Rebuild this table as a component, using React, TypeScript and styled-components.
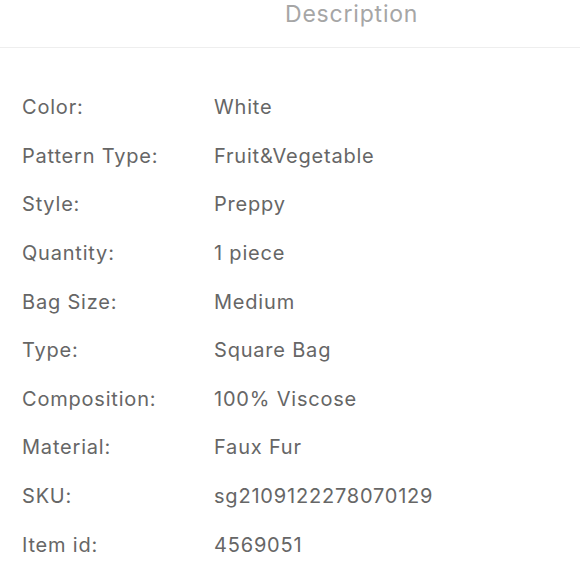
import React from "react";
import styled, { createGlobalStyle } from "styled-components";

const GlobalStyle = createGlobalStyle`
  html, body {
    margin: 0;
    padding: 0;
    background: #ffffff;
    font-family: Inter, "Noto Sans", sans-serif;
  }
`;

const rows: [string, string][] = [
  ["Color:", "White"],
  ["Pattern Type:", "Fruit&Vegetable"],
  ["Style:", "Preppy"],
  ["Quantity:", "1 piece"],
  ["Bag Size:", "Medium"],
  ["Type:", "Square Bag"],
  ["Composition:", "100% Viscose"],
  ["Material:", "Faux Fur"],
  ["SKU:", "sg2109122278070129"],
  ["Item id:", "4569051"],
];

export default function App(): React.ReactElement {
  return (
    <Page>
      <GlobalStyle />
      <Header>
        <Title>Description</Title>
      </Header>
      <List>
        {rows.map(([label, value]) => (
          <Row key={label}>
            <Label>{label}</Label>
            <Value>{value}</Value>
          </Row>
        ))}
      </List>
    </Page>
  );
}

const Page = styled.div`
  width: 580px;
  height: 580px;
  overflow: hidden;
`;

const Header = styled.div`
  height: 48px;
  display: flex;
  align-items: center;
  justify-content: flex-start;
  padding-left: 285px;
  border-bottom: 1px solid #eeeeee;
  box-sizing: border-box;
`;

const Title = styled.div`
  font-size: 23px;
  letter-spacing: 0.8px;
  color: #a6a6a6;
  margin-top: -20px;
`;

const List = styled.div`
  display: flex;
  flex-direction: column;
  padding: 35px 0 0 22px;
`;

const Row = styled.div`
  display: grid;
  grid-template-columns: 192px 1fr;
  height: 48.6px;
  align-items: center;
  font-size: 20px;
  letter-spacing: 0.8px;
  color: #666666;
`;

const Label = styled.div``;
const Value = styled.div``;
